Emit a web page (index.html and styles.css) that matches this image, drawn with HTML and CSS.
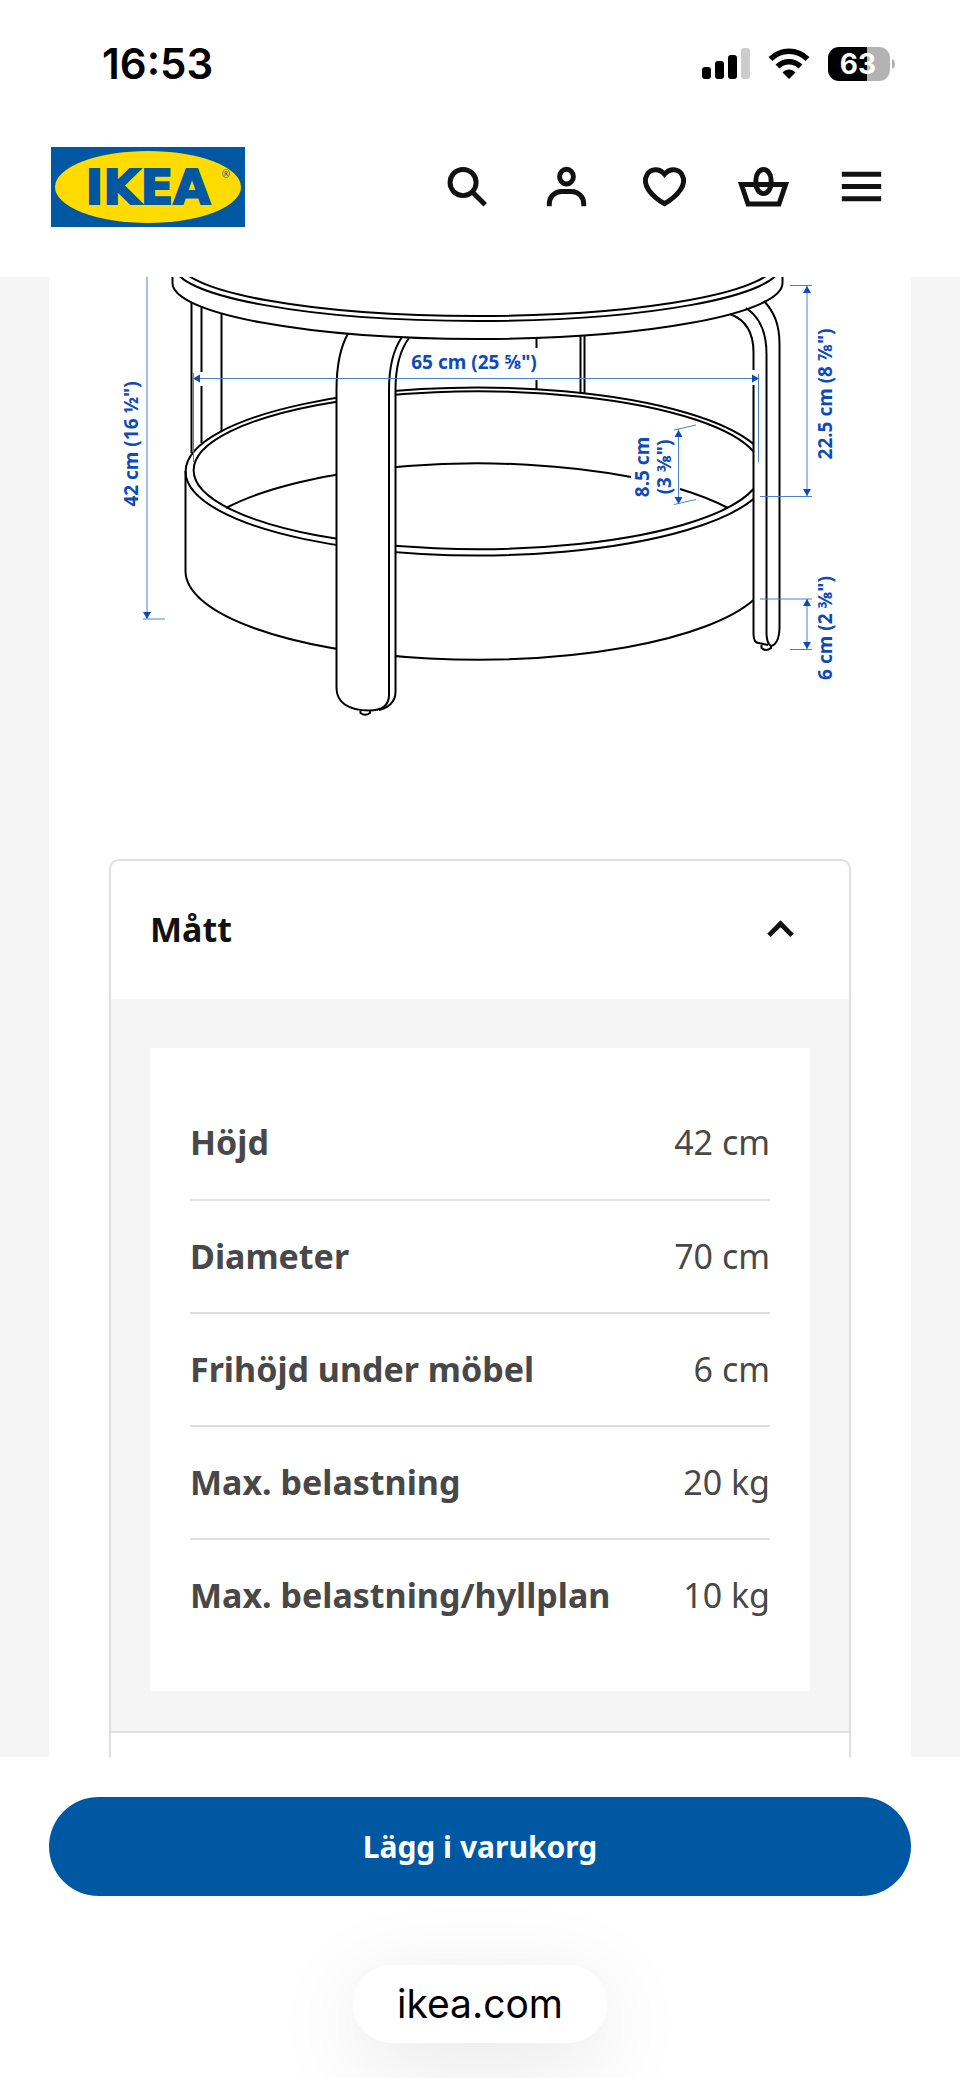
FILE: index.html
```html
<!DOCTYPE html>
<html lang="sv">

<head>
    <meta charset="UTF-8">
    <meta name="viewport" content="width=device-width, initial-scale=1.0">
    <title>Mått - IKEA</title>
    <link rel="stylesheet" href="styles.css">
</head>

<body>
    <div class="status-bar">
        <span class="status-time">16:53</span>
        <div class="status-icons">
            <svg width="48" height="31" viewBox="0 0 48 31" aria-hidden="true">
                <rect x="0" y="19" width="9" height="12" rx="3" />
                <rect x="13" y="13" width="9" height="18" rx="3" />
                <rect x="26" y="7" width="9" height="24" rx="3" />
                <rect x="39" y="0" width="9" height="31" rx="3" fill="#ccc" />
            </svg>
            <svg width="42" height="31" viewBox="0 0 42 31" aria-hidden="true">
                <path d="M2.500 11C13 0.500 29 0.500 39.500 11" fill="none" stroke="#000" stroke-width="5.500" />
                <path d="M9.500 18.500C16 12 26 12 32.500 18.500" fill="none" stroke="#000" stroke-width="5.500" />
                <path d="M14.500 24.500C18 20.500 24 20.500 27.500 24.500L21 31z" />
            </svg>
            <svg width="68" height="34" viewBox="0 0 68 34" role="img" aria-label="Batteri">
                <path d="M11 0H39V34H11A11 11 0 0 1 0 23V11A11 11 0 0 1 11 0z" />
                <path d="M39 0H51A11 11 0 0 1 62 11V23A11 11 0 0 1 51 34H39z" fill="#b3b3b3" />
                <path d="M64 12Q67 13 67 17T64 22z" fill="#b3b3b3" />
                <text class="battery-text" x="30" y="27" text-anchor="middle">63</text>
            </svg>
        </div>
    </div>

    <header class="header">
        <a class="logo" href="/" aria-label="IKEA">
            <svg width="194" height="80" viewBox="0 0 194 80">
                <rect width="194" height="80" fill="#0058a3" />
                <ellipse cx="97" cy="40" rx="93" ry="36" fill="#ffdb00" />
                <text class="logo-text" x="97" y="57" text-anchor="middle">IKEA</text>
                <text class="logo-mark" x="175" y="31" text-anchor="middle">®</text>
            </svg>
        </a>
        <nav class="header-nav">
            <button class="icon-btn" type="button" aria-label="Sök">
                <svg viewBox="0 0 24 24">
                    <circle cx="10.200" cy="10.400" r="5.300" />
                    <path d="M14 14.200L19.200 19.400" />
                </svg>
            </button>
            <button class="icon-btn" type="button" aria-label="Logga in">
                <svg viewBox="0 0 24 24">
                    <ellipse cx="12" cy="8" rx="2.800" ry="3" />
                    <path d="M5 20v-1a5 5 0 0 1 5-5h4a5 5 0 0 1 5 5v1" />
                </svg>
            </button>
            <button class="icon-btn" type="button" aria-label="Favoriter">
                <svg viewBox="0 0 24 24">
                    <path d="M12 7C9.900 4.500 6.500 4.700 5 7C3.800 9 4.100 11.400 5.700 13.600C7.200 15.700 9.400 17.500 12 19C14.600 17.500 16.800 15.700 18.300 13.600C19.900 11.400 20.200 9 19 7C17.500 4.700 14.100 4.500 12 7z" />
                </svg>
            </button>
            <button class="icon-btn" type="button" aria-label="Varukorg">
                <svg viewBox="0 0 24 24">
                    <rect x="8.900" y="5.100" width="6.200" height="9.800" rx="3.100" ry="4.300" />
                    <path class="filled" fill-rule="evenodd" d="M1.600 10.200h20.800L19 20.100H5zM4.400 12.200L6.400 18.100h11.200l2-5.900z" />
                </svg>
            </button>
            <button class="icon-btn" type="button" aria-label="Meny">
                <svg viewBox="0 0 24 24">
                    <path d="M4 7h16M4 12h16M4 17h16" />
                </svg>
            </button>
        </nav>
    </header>

    <main class="main">
        <div class="sheet">
            <svg class="drawing" viewBox="49 277 862 483" role="img" aria-label="Måttskiss av soffbord">
                <g class="ink">
                    <!-- back legs -->
                    <path d="M191.500 302V453M201.500 306V372M201.500 386V443M221.500 313V431" />
                    <path d="M536.500 338V348M536.500 380V389M580.500 335V393M584.500 335V393" />

                    <!-- tray -->
                    <path d="M753.500 444A292 84 0 1 0 753.500 499" />
                    <path d="M753.500 451.500A284 79 0 1 0 753.500 489" />
                    <path d="M185.500 471V571A292 88.500 0 0 0 753.500 600" />
                    <path d="M226 508A292 91 0 0 1 631 477M680 489A292 91 0 0 1 728 508" />

                    <!-- right leg -->
                    <path d="M730 314C746 320 753.500 333 753.500 352V370M753.500 385V634Q753.500 643 759 643L768 645" />
                    <path d="M746 308C760 317 766.500 334 766.500 354V634Q767 644 771 646" />
                    <path d="M764 301C774 312 779.500 324 779.500 344V628Q779 644 771 646" />
                    <path d="M761.500 645V648Q766 652 771 648V646" />
                </g>

                <!-- front leg, covers the tray behind it -->
                <path class="leg" d="M348 333.500C341 346 336.500 364 336.500 390V688C336.500 702 348 710.500 369 710.500C386 710.500 395.500 702 395.500 692V390C395.500 368 400 350 409 338z" />
                <g class="ink">
                    <path d="M348 333.500C341 346 336.500 364 336.500 390V688C336.500 702 348 710.500 369 710.500C384 710.500 389 704 389 695V390C389 368 393 350 402 337" />
                    <path d="M409 338C400 350 395.500 368 395.500 390V692C395.500 702 388 708 379 710" />
                    <path d="M360.500 710.500V713Q365 716.500 370 713V710.500" />

                    <!-- table top -->
                    <path d="M172.500 270V283A305 56 0 0 0 782.500 283V270" />
                    <path d="M174.500 266A303 55 0 0 0 780.500 266" />
                    <path d="M179.500 262.500A298 53.500 0 0 0 775.500 262.500" />
                </g>

                <g class="dim-line">
                    <path d="M147 277V618M143 619H165" />
                    <path d="M194 378.500H758M193.500 373V462M758.500 374V462" />
                    <path d="M807 286V496M790 285.500H812M760 496.500H812" />
                    <path d="M807 599V649M760 599H812M790 649.500H812" />
                    <path d="M678.500 429V503M674 430L696 425M674 504.500L696 499.500" />
                </g>
                <g class="dim-arrow">
                    <path d="M143 612h8l-4 7z" />
                    <path d="M193 378.500l7-4v8zM759 378.500l-7-4v8z" />
                    <path d="M807 286l-4 7h8zM807 496l-4-7h8z" />
                    <path d="M807 599l-4 7h8zM807 649l-4-7h8z" />
                    <path d="M678.500 430l-4 7h8zM678.500 504l-4-7h8z" />
                </g>
                <g class="dim-text">
                    <text x="474" y="369">65 cm (25 ⅝")</text>
                    <text transform="translate(138 444) rotate(-90)">42 cm (16 ½")</text>
                    <text transform="translate(832 394) rotate(-90)">22.5 cm (8 ⅞")</text>
                    <text transform="translate(832 628) rotate(-90)">6 cm (2 ⅜")</text>
                    <text transform="translate(649 467) rotate(-90)">8.5 cm</text>
                    <text transform="translate(671 467) rotate(-90)">(3 ⅜")</text>
                </g>
            </svg>

            <div class="accordion">
                <section class="accordion-item">
                    <h2 class="accordion-heading">
                        <button class="accordion-btn" type="button" aria-expanded="true">
                            Mått
                            <svg class="chevron" viewBox="0 0 24 24" aria-hidden="true">
                                <path d="M7.300 14.800L12 10.100L16.700 14.800" />
                            </svg>
                        </button>
                    </h2>
                    <div class="accordion-panel">
                        <div class="card">
                            <table class="measurements">
                                <tr>
                                    <th scope="row">Höjd</th>
                                    <td>42 cm</td>
                                </tr>
                                <tr>
                                    <th scope="row">Diameter</th>
                                    <td>70 cm</td>
                                </tr>
                                <tr>
                                    <th scope="row">Frihöjd under möbel</th>
                                    <td>6 cm</td>
                                </tr>
                                <tr>
                                    <th scope="row">Max. belastning</th>
                                    <td>20 kg</td>
                                </tr>
                                <tr>
                                    <th scope="row">Max. belastning/hyllplan</th>
                                    <td>10 kg</td>
                                </tr>
                            </table>
                        </div>
                    </div>
                </section>
                <section class="accordion-item"></section>
            </div>
        </div>
    </main>

    <footer class="footer">
        <button class="buy-btn" type="button">Lägg i varukorg</button>
        <a class="address" href="/">ikea.com</a>
    </footer>
</body>

</html>
```
FILE: styles.css
```css
* {
    box-sizing: border-box;
}

body {
    margin: 0;
    height: 100vh;
    display: flex;
    flex-direction: column;
    overflow: hidden;
    background: #fff;
    color: #111;
    font-family: "Noto Sans", sans-serif;
}

button {
    border: none;
    background: none;
    padding: 0;
    color: inherit;
    font-family: inherit;
    cursor: pointer;
}

svg {
    display: block;
}

/* phone status bar */
.status-bar {
    display: flex;
    justify-content: space-between;
    align-items: center;
    flex: none;
    height: 128px;
    padding: 0 64px 1px 102px;
    color: #000;
    font-family: Inter, sans-serif;
}

.status-time {
    font-size: 42px;
    font-weight: 600;
}

.status-icons {
    display: flex;
    align-items: center;
    gap: 18px;
}

.battery-text {
    fill: #fff;
    font-size: 28px;
    font-weight: 700;
}

/* header */
.header {
    display: flex;
    justify-content: space-between;
    align-items: center;
    flex: none;
    padding: 19px 69px 50px 51px;
}

.logo-text {
    fill: #0058a3;
    stroke: #0058a3;
    stroke-width: 2px;
    font-family: "DejaVu Sans", sans-serif;
    font-size: 48px;
    font-weight: 700;
}

.logo-mark {
    fill: #0058a3;
    font-size: 10px;
}

.header-nav {
    display: flex;
    justify-content: space-between;
    width: 453px;
    padding-bottom: 2px;
}

.icon-btn {
    width: 59px;
    height: 59px;
}

.icon-btn svg {
    fill: none;
    stroke: #111;
    stroke-width: 2;
}

.icon-btn .filled {
    fill: #111;
    stroke: none;
}

/* product sheet */
.main {
    flex: 1;
    min-height: 0;
    overflow: hidden;
    padding: 0 49px;
    background: #f5f5f5;
}

.sheet {
    min-height: 100%;
    background: #fff;
}

.drawing {
    width: 100%;
}

.ink {
    fill: none;
    stroke: #000;
    stroke-width: 2;
}

.leg {
    fill: #fff;
}

.dim-line {
    fill: none;
    stroke: #4a80d4;
    stroke-width: 1;
}

.dim-arrow {
    fill: #0f4ab8;
}

.dim-text {
    fill: #0f4ab8;
    font-size: 19px;
    font-weight: 700;
    text-anchor: middle;
}

/* accordion */
.accordion {
    margin: 99px 60px 0;
    border: 2px solid #dfdfdf;
    border-radius: 10px;
}

.accordion-item {
    min-height: 138px;
}

.accordion-item + .accordion-item {
    border-top: 2px solid #dfdfdf;
}

.accordion-heading {
    margin: 0;
}

.accordion-btn {
    display: flex;
    justify-content: space-between;
    align-items: center;
    width: 100%;
    height: 138px;
    padding: 0 39px 3px;
    font-size: 34px;
    font-weight: 700;
}

.chevron {
    width: 59px;
    height: 59px;
    fill: none;
    stroke: #111;
    stroke-width: 2;
}

.accordion-panel {
    padding: 49px 39px 40px;
    background: #f5f5f5;
}

.card {
    padding: 39px 40px;
    background: #fff;
}

.measurements {
    width: 100%;
    border-collapse: collapse;
    color: #484848;
    font-size: 34px;
}

.measurements th,
.measurements td {
    height: 113px;
    padding: 0 0 2px;
    text-align: left;
}

.measurements td {
    text-align: right;
}

.measurements tr + tr {
    border-top: 2px solid #dfdfdf;
}

/* bottom bar */
.footer {
    display: flex;
    flex-direction: column;
    align-items: center;
    flex: none;
    gap: 69px;
    padding: 40px 49px 35px;
}

.buy-btn {
    width: 100%;
    height: 99px;
    border-radius: 50px;
    background: #0058a3;
    color: #fff;
    font-size: 30px;
    font-weight: 700;
}

.address {
    padding: 0 44px;
    border-radius: 39px;
    background: #fff;
    box-shadow: 0 20px 90px rgba(0, 0, 0, 0.1);
    color: #000;
    font-family: Inter, sans-serif;
    font-size: 39px;
    font-weight: 400;
    line-height: 78px;
    text-decoration: none;
}
```
